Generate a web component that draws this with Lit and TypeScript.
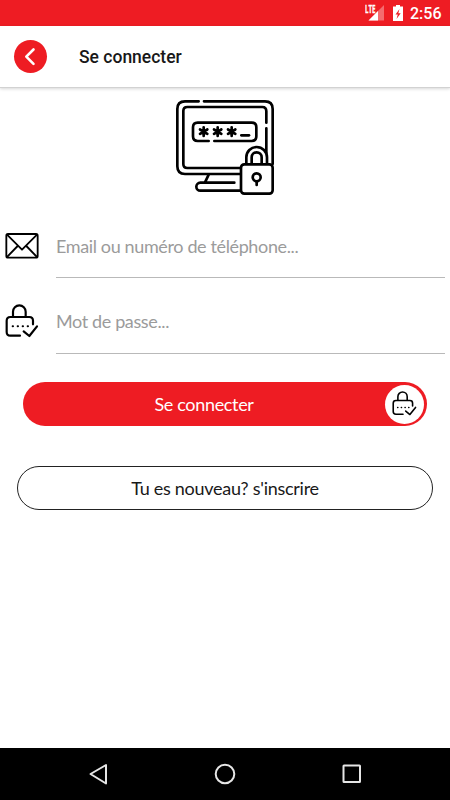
import { LitElement, html, css, svg } from "lit";
import { customElement } from "lit/decorators.js";

const star = (x: number) => svg`<path d="M${x} 112v26M${x - 11} 118.500l22 13M${x + 11} 118.500l-22 13"/>`;

@customElement("lock-check-icon")
class LockCheckIcon extends LitElement {
  static styles = css`
    :host { display: block; width: 34px; height: 34px; }
    svg { display: block; width: 100%; height: 100%; }
  `;
  render() {
    return html`<svg viewBox="0 0 102 102" fill="none" stroke="#000" stroke-width="6.5" stroke-linecap="round" stroke-linejoin="round">
      <path d="M24 38V23a19 19 0 0 1 38 0v15"/>
      <path d="M45 95H16q-11 0-11-11V50q0-11 11-11h57q11 0 11 11v11"/>
      <path d="M56 82l17 14 23-29"/>
      <path d="M23 67h1M38 67h1M53 67h1M68 67h1" stroke-width="6"/>
    </svg>`;
  }
}

@customElement("status-bar")
class StatusBar extends LitElement {
  static styles = css`
    :host { display: flex; height: 26px; background: #ee1c23; color: #fff; justify-content: flex-end; align-items: center; box-sizing: border-box; padding-right: 9px; }
    svg { display: block; width: 45px; height: 26px; }
    .time { font: 500 16px/26px Roboto, sans-serif; width: 31px; white-space: nowrap; padding-top: 2px; }
    .lte { font: 700 10px "Open Sans", sans-serif; }
  `;
  render() {
    return html`<svg viewBox="0 0 45 26">
        <path d="M19 5v15.500H3.500z" fill="#fff" fill-opacity=".35"/>
        <path d="M13 11v9.500H3.500z" fill="#fff"/>
        <text class="lte" x="0" y="12.500" fill="#fff" stroke="#fff" stroke-width=".3" textLength="10.500" lengthAdjust="spacingAndGlyphs">LTE</text>
        <path d="M28 6.500h3V5h4v1.500h3V21H28V6.500z" fill="#fff"/>
        <path d="M34.500 9l-4 5.500h2.300L31.500 19l4.200-5.800h-2.400z" fill="#ee1c23"/>
      </svg><span class="time">2:56</span>`;
  }
}

@customElement("app-root")
class AppRoot extends LitElement {
  static styles = css`
    :host { display: flex; flex-direction: column; width: 450px; height: 800px; background: #fff; overflow: hidden; font-family: Lato, sans-serif; }
    svg { display: block; }
    header { height: 61px; flex: none; display: flex; align-items: center; padding-left: 14px; gap: 32px; border-bottom: 1px solid #d2d2d2; box-shadow: 0 1px 3px rgba(0,0,0,.16); box-sizing: content-box; }
    .back { width: 33px; height: 33px; border-radius: 50%; background: #ee1c23; }
    h1 { margin: 0; font: 500 17.5px/24px Roboto, sans-serif; color: #181818; }
    main { flex: 1; display: flex; flex-direction: column; }
    .hero { width: 120px; height: 115px; margin: 2px 0 0 165px; }
    .field { display: flex; height: 75px; box-sizing: border-box; padding: 0 5px; }
    .icon { width: 34px; height: 34px; margin: 24px 17px 0 0; flex: none; }
    .input { flex: 1; height: 73px; border-bottom: 1px solid #b9b9b9; box-sizing: border-box; padding-top: 29px; font-size: 18px; line-height: 24px; letter-spacing: -.37px; color: #9b9b9b; white-space: nowrap; }
    .field + .field .input { height: 74px; }
    .login { margin: 27px 23px 0; height: 44px; border-radius: 22px; background: #ee1c23; color: #fff; display: flex; align-items: center; padding-right: 3px; box-sizing: border-box; font-size: 18px; letter-spacing: -.33px; }
    .login span { flex: 1; text-align: center; }
    .disc { width: 39px; height: 39px; border-radius: 50%; background: #fff; display: flex; align-items: center; justify-content: center; }
    .disc lock-check-icon { width: 25px; height: 25px; margin-bottom: 2px; }
    .signup { margin: 40px 17px 0; height: 44px; border-radius: 22px; border: 1px solid #222; box-sizing: border-box; display: flex; align-items: center; justify-content: center; color: #191919; font-size: 18px; letter-spacing: -.27px; }
    nav { height: 52px; flex: none; background: #000; }
  `;
  render() {
    return html`
      <status-bar></status-bar>
      <header>
        <div class="back"><svg width="33" height="33" fill="none" stroke="#fff" stroke-width="2.600" stroke-linecap="round" stroke-linejoin="round"><path d="M19.500 9.500l-7.200 7.200 7.200 7.200"/></svg></div>
        <h1>Se connecter</h1>
      </header>
      <main>
        <svg class="hero" viewBox="0 0 360 345" fill="none" stroke="#000" stroke-width="8" stroke-linecap="round" stroke-linejoin="round">
          <path d="M101 34H60Q37 34 37 57V229Q37 252 60 252H226M117 34H300Q323 34 323 57V222"/>
          <path d="M304 98V64Q304 51 292 51H67Q55 51 55 63V222Q55 234 67 234H226M304 115V190"/>
          <path d="M131 153H98Q84 153 84 139V112Q84 98 98 98H260Q274 98 274 112V139Q274 153 260 153H148"/>
          ${[116, 158, 200].map(star)}
          <path d="M229 136H252"/>
          <path d="M244 222V202a31 31 0 0 1 62 0V222M260 222V202a15 15 0 0 1 30 0V222"/>
          <rect x="228" y="223" width="95" height="88" rx="10" fill="#fff"/>
          <circle cx="275" cy="262" r="12"/><path d="M275 275v10"/>
          <path d="M131 254L120 277M208 278H106a12 12 0 0 0 0 24H227"/>
        </svg>
        <div class="fields">
          <div class="field">
            <svg class="icon" viewBox="0 0 102 102" fill="none" stroke="#000" stroke-width="5.500" stroke-linecap="round" stroke-linejoin="round">
              <rect x="4" y="15" width="94" height="71" rx="5"/>
              <path d="M6 17L51 62L96 17M6 84L38 51M96 84L64 51"/>
            </svg>
            <div class="input">Email ou numéro de téléphone...</div>
          </div>
          <div class="field">
            <lock-check-icon class="icon"></lock-check-icon>
            <div class="input">Mot de passe...</div>
          </div>
        </div>
        <div class="login"><span>Se connecter</span><div class="disc"><lock-check-icon></lock-check-icon></div></div>
        <div class="signup">Tu es nouveau? s'inscrire</div>
      </main>
      <nav><svg width="450" height="52" fill="none" stroke="#e6e6e6" stroke-width="2" stroke-linejoin="round">
        <path d="M106 17v18.500L90.500 26z"/><circle cx="225" cy="26" r="9.300"/><rect x="343.500" y="17.500" width="16.500" height="16.500" rx=".5"/>
      </svg></nav>`;
  }
}
